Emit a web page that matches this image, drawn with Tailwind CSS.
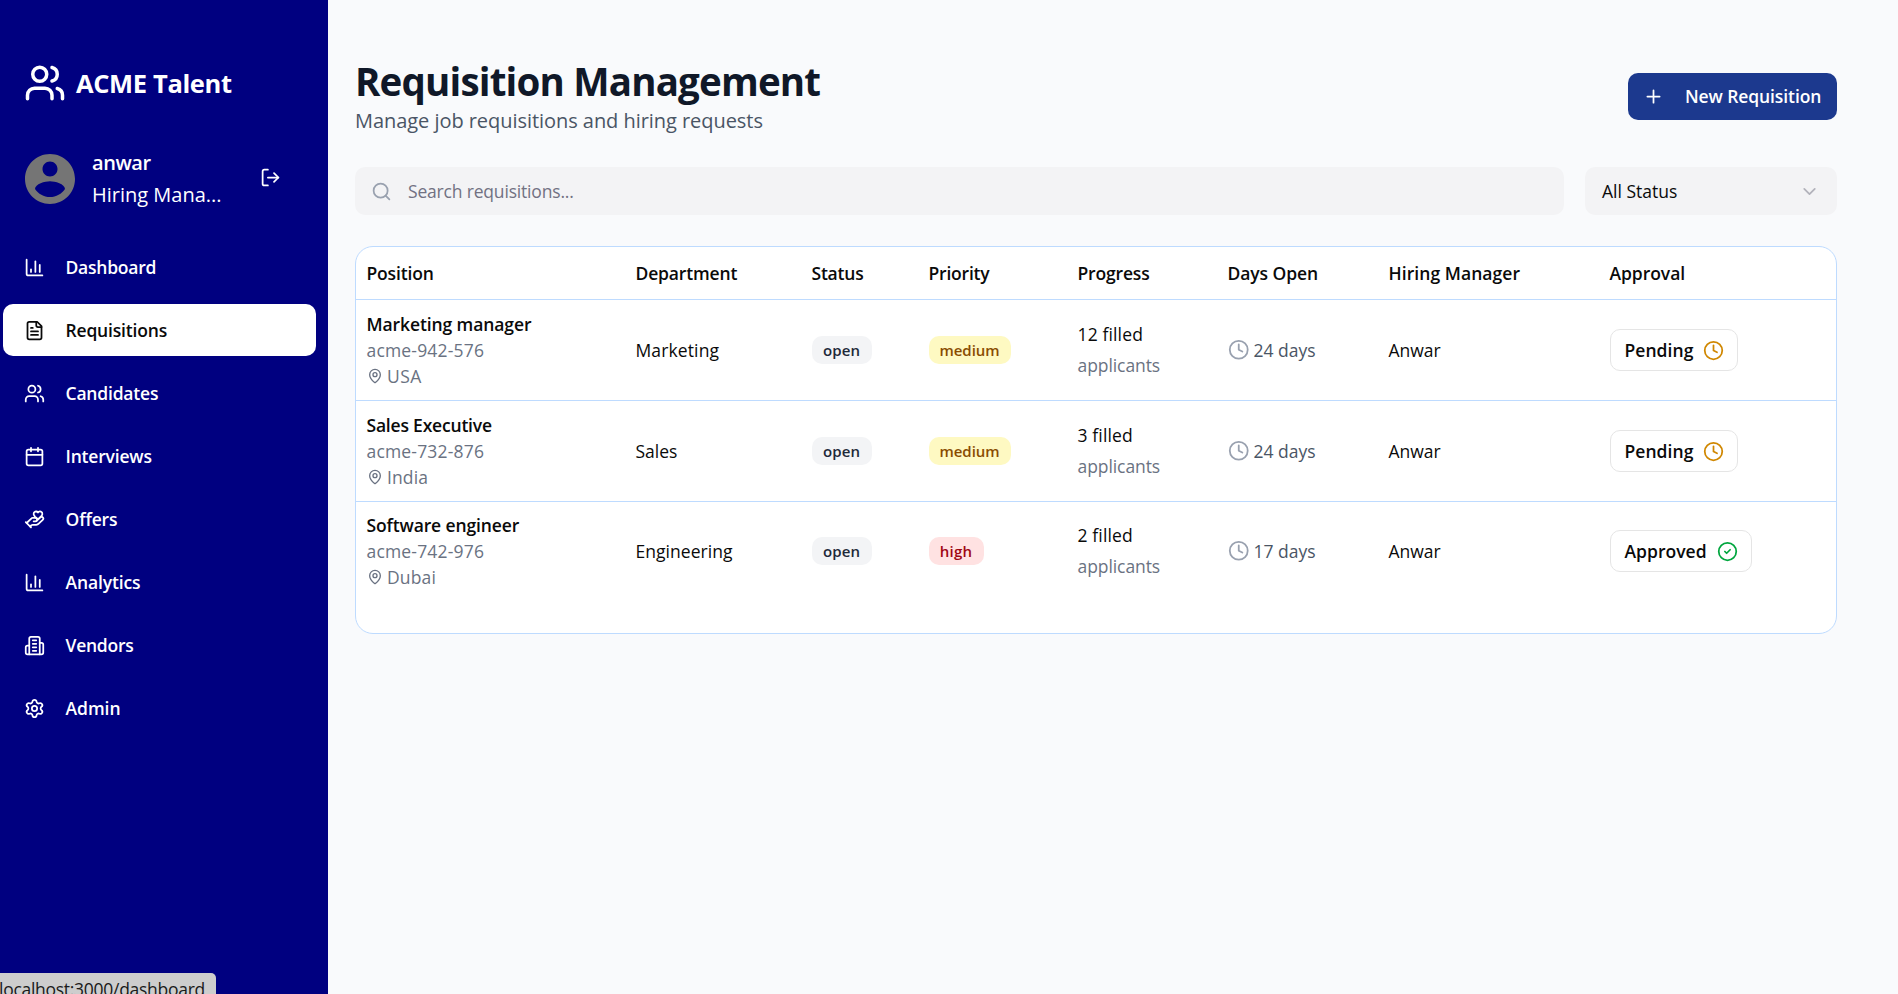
<!DOCTYPE html>
<html lang="en">
<head>
<meta charset="utf-8">
<title>ACME Talent</title>
<script src="https://cdn.jsdelivr.net/npm/@tailwindcss/browser@4"></script>
</head>
<body class="h-screen overflow-hidden bg-[#f9fafc] font-['Open_Sans','Noto_Sans',sans-serif] text-[17.5px] text-neutral-950">

<!-- icon symbols -->
<svg class="hidden">
  <symbol id="users" viewBox="0 0 24 24"><path d="M16 21v-2a4 4 0 0 0-4-4H6a4 4 0 0 0-4 4v2"/><path d="M16 3.128a4 4 0 0 1 0 7.744"/><path d="M22 21v-2a4 4 0 0 0-3-3.87"/><circle cx="9" cy="7" r="4"/></symbol>
  <symbol id="chart" viewBox="0 0 24 24"><path d="M3 3v16a2 2 0 0 0 2 2h16"/><path d="M18 17V9"/><path d="M13 17V5"/><path d="M8 17v-3"/></symbol>
  <symbol id="file" viewBox="0 0 24 24"><path d="M15 2H6a2 2 0 0 0-2 2v16a2 2 0 0 0 2 2h12a2 2 0 0 0 2-2V7Z"/><path d="M14 2v4a2 2 0 0 0 2 2h4"/><path d="M10 9H8"/><path d="M16 13H8"/><path d="M16 17H8"/></symbol>
  <symbol id="calendar" viewBox="0 0 24 24"><path d="M8 2v4"/><path d="M16 2v4"/><rect x="3" y="4" width="18" height="18" rx="2"/><path d="M3 10h18"/></symbol>
  <symbol id="hand" viewBox="0 0 24 24"><path d="M11 14h2a2 2 0 1 0 0-4h-3c-.6 0-1.1.2-1.4.6L3 16"/><path d="m7 20 1.6-1.4c.3-.4.8-.6 1.4-.6h4c1.1 0 2.1-.4 2.8-1.2l4.6-4.4a2 2 0 0 0-2.75-2.91l-4.2 3.9"/><path d="m2 15 6 6"/><path d="M19.5 8.5c.7-.7 1.5-1.6 1.5-2.7A2.73 2.73 0 0 0 16 4a2.78 2.78 0 0 0-5 1.8c0 1.2.8 2 1.5 2.8L16 12Z"/></symbol>
  <symbol id="building" viewBox="0 0 24 24"><path d="M6 22V4a2 2 0 0 1 2-2h8a2 2 0 0 1 2 2v18Z"/><path d="M6 12H4a2 2 0 0 0-2 2v6a2 2 0 0 0 2 2h2"/><path d="M18 9h2a2 2 0 0 1 2 2v9a2 2 0 0 1-2 2h-2"/><path d="M10 6h4"/><path d="M10 10h4"/><path d="M10 14h4"/><path d="M10 18h4"/></symbol>
  <symbol id="gear" viewBox="0 0 24 24"><path d="M9.671 4.136a2.34 2.34 0 0 1 4.659 0 2.34 2.34 0 0 0 3.319 1.915 2.34 2.34 0 0 1 2.33 4.033 2.34 2.34 0 0 0 0 3.831 2.34 2.34 0 0 1-2.33 4.033 2.34 2.34 0 0 0-3.319 1.915 2.34 2.34 0 0 1-4.659 0 2.34 2.34 0 0 0-3.32-1.915 2.34 2.34 0 0 1-2.33-4.033 2.34 2.34 0 0 0 0-3.831A2.34 2.34 0 0 1 6.35 6.051a2.34 2.34 0 0 0 3.319-1.915"/><circle cx="12" cy="12" r="3"/></symbol>
  <symbol id="logout" viewBox="0 0 24 24"><path d="m16 17 5-5-5-5"/><path d="M21 12H9"/><path d="M9 21H5a2 2 0 0 1-2-2V5a2 2 0 0 1 2-2h4"/></symbol>
  <symbol id="clock" viewBox="0 0 24 24"><circle cx="12" cy="12" r="10"/><path d="M12 6v6l4 2"/></symbol>
  <symbol id="check" viewBox="0 0 24 24"><circle cx="12" cy="12" r="10"/><path d="m9 12 2 2 4-4"/></symbol>
  <symbol id="pin" viewBox="0 0 24 24"><path d="M20 10c0 4.993-5.539 10.193-7.399 11.799a1 1 0 0 1-1.202 0C9.539 20.193 4 14.993 4 10a8 8 0 0 1 16 0"/><circle cx="12" cy="10" r="3"/></symbol>
</svg>

<div class="flex h-full">
  <aside class="flex w-[328px] shrink-0 flex-col bg-[#000080] text-white">
    <div class="flex h-[146px] items-start pt-[62px] pl-6">
      <svg class="size-[42px] fill-none stroke-current stroke-2 [stroke-linecap:round] [stroke-linejoin:round]"><use href="#users"/></svg>
      <span class="ml-[10px] text-[25.5px] leading-[42px] font-bold tracking-[-0.36px]">ACME Talent</span>
    </div>
    <div class="flex h-[95px] items-start pl-5">
      <svg class="mt-[3px] size-[60px] fill-[#757575]" viewBox="0 0 24 24"><path d="M12 2C6.48 2 2 6.48 2 12s4.48 10 10 10 10-4.48 10-10S17.52 2 12 2zm0 3c1.66 0 3 1.34 3 3s-1.34 3-3 3-3-1.34-3-3 1.34-3 3-3zm0 14.2c-2.5 0-4.71-1.28-6-3.22.03-1.99 4-3.08 6-3.08 1.99 0 5.97 1.09 6 3.08-1.29 1.94-3.5 3.22-6 3.22z"/></svg>
      <div class="ml-[12px] w-[168px] pt-px text-[20px] leading-8">
        <p class="font-semibold tracking-[-0.42px]">anwar</p>
        <p>Hiring Mana...</p>
      </div>
      <svg class="mt-[21px] size-[21px] fill-none stroke-current stroke-2 [stroke-linecap:round] [stroke-linejoin:round]"><use href="#logout"/></svg>
    </div>
    <nav class="ml-[3px] flex w-[313px] flex-col gap-[11px] font-semibold [&_a]:flex [&_a]:h-[52px] [&_a]:items-center [&_a]:gap-[20.5px] [&_a]:rounded-[10px] [&_a]:pl-[21px] [&_svg]:size-[21px] [&_svg]:fill-none [&_svg]:stroke-current [&_svg]:stroke-2 [&_svg]:[stroke-linecap:round] [&_svg]:[stroke-linejoin:round]">
      <a><svg><use href="#chart"/></svg><span class="tracking-[-0.24px]">Dashboard</span></a>
      <a class="bg-white text-neutral-950"><svg><use href="#file"/></svg><span class="tracking-[-0.18px]">Requisitions</span></a>
      <a><svg><use href="#users"/></svg><span class="tracking-[-0.2px]">Candidates</span></a>
      <a><svg><use href="#calendar"/></svg><span class="tracking-[-0.19px]">Interviews</span></a>
      <a><svg><use href="#hand"/></svg><span class="tracking-[-0.1px]">Offers</span></a>
      <a><svg><use href="#chart"/></svg><span class="tracking-[-0.12px]">Analytics</span></a>
      <a><svg><use href="#building"/></svg><span class="tracking-[-0.25px]">Vendors</span></a>
      <a><svg><use href="#gear"/></svg><span class="tracking-[-0.03px]">Admin</span></a>
    </nav>
  </aside>

  <main class="flex-1 pt-[55px] pr-[61px] pl-[27px]">
    <header class="flex h-[83px] items-center justify-between">
      <div class="h-full">
        <h1 class="text-[38.5px] leading-[53px] font-bold tracking-[-0.82px] text-gray-900">Requisition Management</h1>
        <p class="text-[20px] leading-[26px] tracking-[-0.05px] text-gray-600">Manage job requisitions and hiring requests</p>
      </div>
      <button class="flex h-[47px] w-[209px] items-center rounded-[10px] bg-blue-900 pl-[15px] font-semibold text-white">
        <svg class="size-[21px] fill-none stroke-current stroke-2 [stroke-linecap:round]" viewBox="0 0 24 24"><path d="M5 12h14M12 5v14"/></svg>
        <span class="ml-[21px] tracking-[-0.1px]">New Requisition</span>
      </button>
    </header>

    <div class="mt-[29px] flex h-12 gap-[21px]">
      <div class="flex flex-1 items-center rounded-[10px] bg-[#f3f3f5] pl-4 text-[#717182]">
        <svg class="size-[21px] fill-none stroke-gray-400 stroke-2 [stroke-linecap:round] [stroke-linejoin:round]" viewBox="0 0 24 24"><circle cx="11" cy="11" r="8"/><path d="m21 21-4.34-4.34"/></svg>
        <span class="ml-4 tracking-[-0.18px]">Search requisitions...</span>
      </div>
      <div class="flex w-[252px] items-center justify-between rounded-[10px] bg-[#f3f3f5] pr-[17px] pl-[17px]">
        <span>All Status</span>
        <svg class="size-[21px] fill-none stroke-[#717182]/50 stroke-2 [stroke-linecap:round] [stroke-linejoin:round]" viewBox="0 0 24 24"><path d="m6 9 6 6 6-6"/></svg>
      </div>
    </div>

    <section class="mt-[31px] h-[388px] rounded-[18px] border border-blue-200 bg-white [&>div]:grid [&>div]:grid-cols-[269px_176px_117px_149px_150px_161px_221px_1fr] [&>div]:items-center [&>div]:pl-[10.5px]">
      <div class="h-[53px] border-b border-blue-200 font-semibold">
        <span class="tracking-[-0.16px]">Position</span>
        <span class="tracking-[-0.16px]">Department</span>
        <span class="tracking-[-0.21px]">Status</span>
        <span class="tracking-[-0.2px]">Priority</span>
        <span class="tracking-[-0.17px]">Progress</span>
        <span class="tracking-[-0.08px]">Days Open</span>
        <span class="tracking-[0.06px]">Hiring Manager</span>
        <span class="tracking-[-0.05px]">Approval</span>
      </div>

      <div class="h-[101px] border-b border-blue-200">
        <div class="leading-[26px] text-gray-500">
          <p class="font-semibold tracking-[-0.1px] text-neutral-950">Marketing manager</p>
          <p class="tracking-[0.18px]">acme-942-576</p>
          <p class="flex items-center tracking-[0.5px]"><svg class="mr-[4.5px] size-4 fill-none stroke-current stroke-2 [stroke-linecap:round] [stroke-linejoin:round]"><use href="#pin"/></svg>USA</p>
        </div>
        <span class="tracking-[0.12px]">Marketing</span>
        <span class="h-7 w-[60px] rounded-[10px] bg-gray-100 text-center text-[15px] leading-7 font-semibold tracking-[0.1px] text-gray-800">open</span>
        <span class="h-7 w-[82px] rounded-[10px] bg-yellow-100 text-center text-[15px] leading-7 font-semibold tracking-[-0.05px] text-yellow-800">medium</span>
        <div class="leading-[31.5px]"><p class="tracking-[0.14px]">12 filled</p><p class="tracking-[-0.08px] text-gray-500">applicants</p></div>
        <span class="flex items-center text-gray-600"><svg class="mr-[4.5px] size-[21.5px] fill-none stroke-gray-400 stroke-2 [stroke-linecap:round] [stroke-linejoin:round]"><use href="#clock"/></svg>24 days</span>
        <span>Anwar</span>
        <span class="flex h-[42px] w-32 items-center justify-between rounded-[10px] border border-neutral-200 pr-[13px] pl-3.5 font-semibold tracking-[0.05px]">Pending<svg class="size-[21px] fill-none stroke-yellow-600 stroke-2 [stroke-linecap:round] [stroke-linejoin:round]"><use href="#clock"/></svg></span>
      </div>

      <div class="h-[101px] border-b border-blue-200">
        <div class="leading-[26px] text-gray-500">
          <p class="font-semibold tracking-[-0.2px] text-neutral-950">Sales Executive</p>
          <p class="tracking-[0.18px]">acme-732-876</p>
          <p class="flex items-center tracking-[0.11px]"><svg class="mr-[4.5px] size-4 fill-none stroke-current stroke-2 [stroke-linecap:round] [stroke-linejoin:round]"><use href="#pin"/></svg>India</p>
        </div>
        <span>Sales</span>
        <span class="h-7 w-[60px] rounded-[10px] bg-gray-100 text-center text-[15px] leading-7 font-semibold tracking-[0.1px] text-gray-800">open</span>
        <span class="h-7 w-[82px] rounded-[10px] bg-yellow-100 text-center text-[15px] leading-7 font-semibold tracking-[-0.05px] text-yellow-800">medium</span>
        <div class="leading-[31.5px]"><p class="tracking-[0.14px]">3 filled</p><p class="tracking-[-0.08px] text-gray-500">applicants</p></div>
        <span class="flex items-center text-gray-600"><svg class="mr-[4.5px] size-[21.5px] fill-none stroke-gray-400 stroke-2 [stroke-linecap:round] [stroke-linejoin:round]"><use href="#clock"/></svg>24 days</span>
        <span>Anwar</span>
        <span class="flex h-[42px] w-32 items-center justify-between rounded-[10px] border border-neutral-200 pr-[13px] pl-3.5 font-semibold tracking-[0.05px]">Pending<svg class="size-[21px] fill-none stroke-yellow-600 stroke-2 [stroke-linecap:round] [stroke-linejoin:round]"><use href="#clock"/></svg></span>
      </div>

      <div class="h-[98px]">
        <div class="leading-[26px] text-gray-500">
          <p class="font-semibold tracking-[-0.13px] text-neutral-950">Software engineer</p>
          <p class="tracking-[0.18px]">acme-742-976</p>
          <p class="flex items-center tracking-[0.14px]"><svg class="mr-[4.5px] size-4 fill-none stroke-current stroke-2 [stroke-linecap:round] [stroke-linejoin:round]"><use href="#pin"/></svg>Dubai</p>
        </div>
        <span class="tracking-[0.05px]">Engineering</span>
        <span class="h-7 w-[60px] rounded-[10px] bg-gray-100 text-center text-[15px] leading-7 font-semibold tracking-[0.1px] text-gray-800">open</span>
        <span class="h-7 w-[55px] rounded-[10px] bg-red-100 text-center text-[15px] leading-7 font-semibold tracking-[0.2px] text-red-800">high</span>
        <div class="leading-[31.5px]"><p class="tracking-[0.14px]">2 filled</p><p class="tracking-[-0.08px] text-gray-500">applicants</p></div>
        <span class="flex items-center text-gray-600"><svg class="mr-[4.5px] size-[21.5px] fill-none stroke-gray-400 stroke-2 [stroke-linecap:round] [stroke-linejoin:round]"><use href="#clock"/></svg>17 days</span>
        <span>Anwar</span>
        <span class="flex h-[42px] w-[142px] items-center justify-between rounded-[10px] border border-neutral-200 pr-[13px] pl-3.5 font-semibold tracking-[0.03px]">Approved<svg class="size-[21px] fill-none stroke-green-600 stroke-2 [stroke-linecap:round] [stroke-linejoin:round]"><use href="#check"/></svg></span>
      </div>
    </section>
  </main>
</div>

<!-- browser link status bubble, cut off by the window edge -->
<div class="fixed bottom-0 left-0 h-[21px] w-[216px] overflow-hidden rounded-tr-[5px] bg-[#cdcdcd] pt-[4px] leading-6 tracking-[-0.28px] whitespace-nowrap text-[#1a1a1a]"><span class="-ml-px">localhost:3000/dashboard</span></div>
</body>
</html>
